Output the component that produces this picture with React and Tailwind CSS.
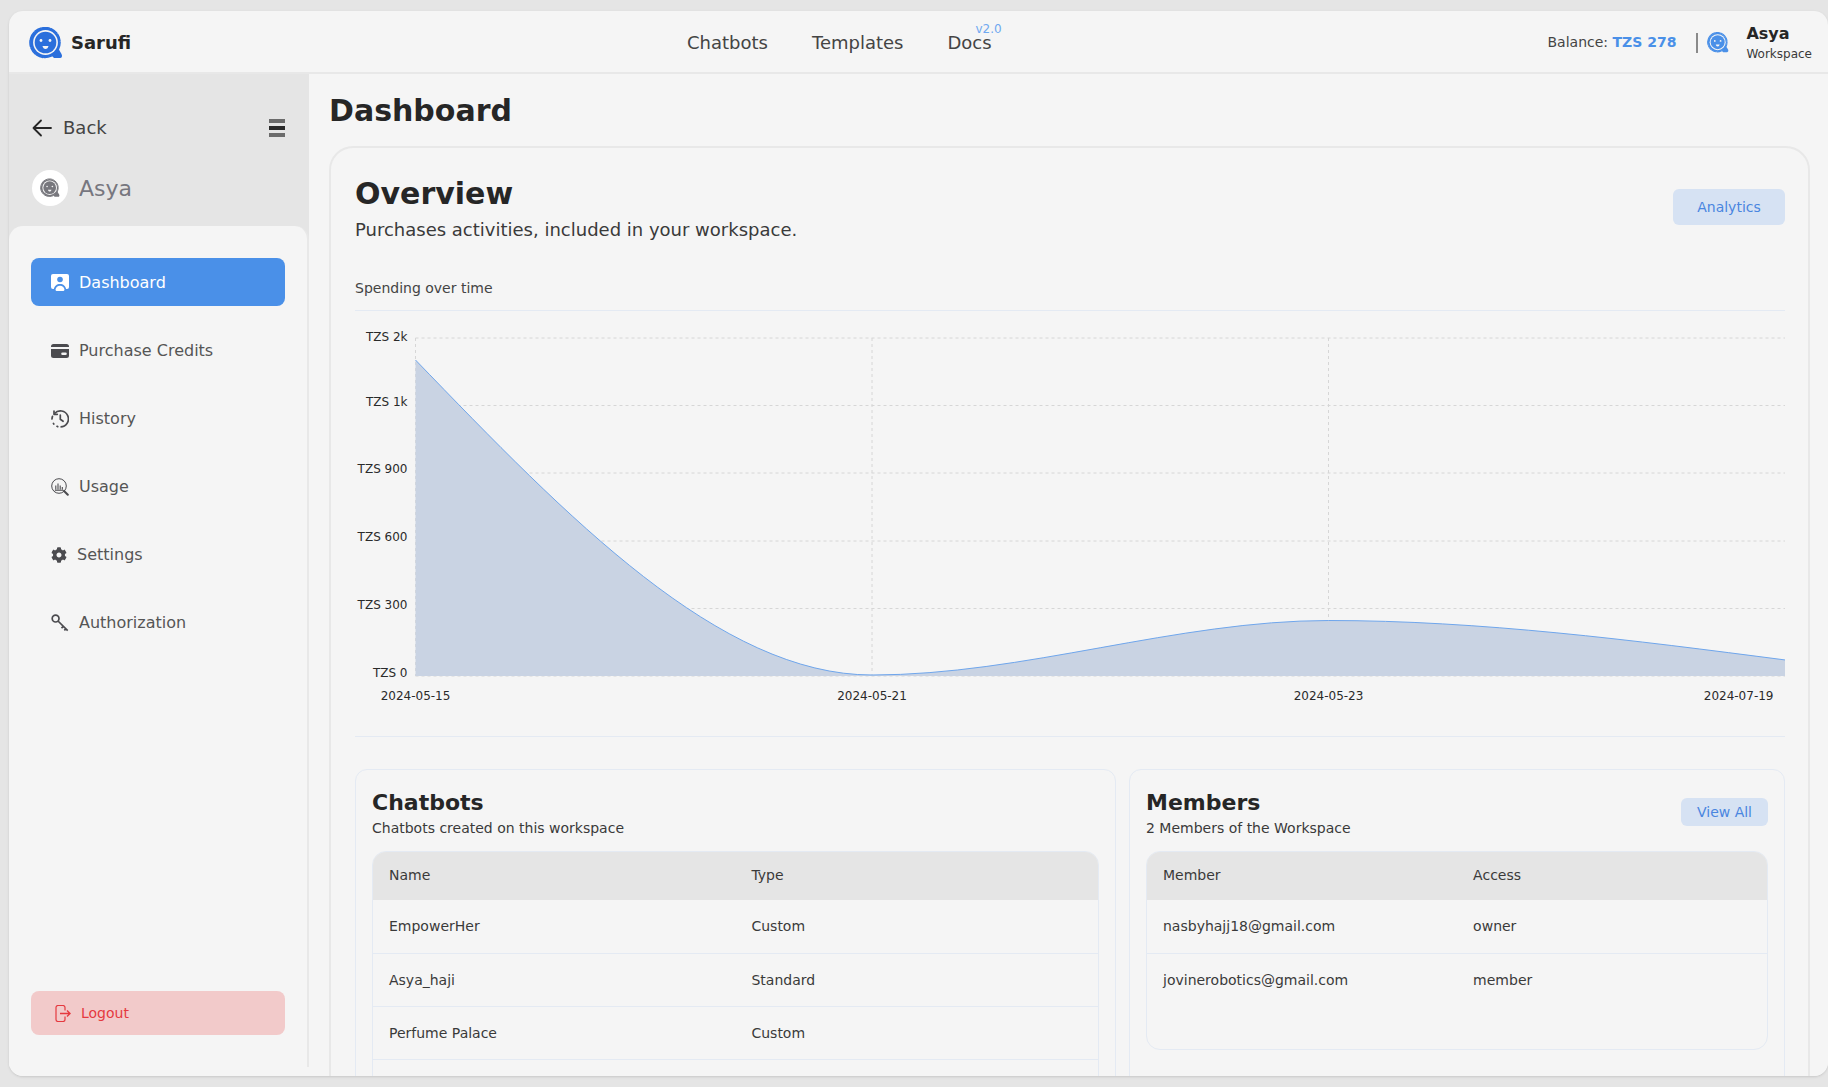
import React from "react";
import { FaCog } from "react-icons/fa";

const BotLogo = ({ color = "#2b6fdc", className = "" }) => (
  <svg viewBox="0 0 34 32" className={className}>
    <circle cx="16" cy="15.500" r="14.800" fill={color} />
    <circle cx="16" cy="15.500" r="15" fill="none" stroke={color} strokeWidth="1.600" strokeDasharray="7 1.500" strokeLinecap="round" />
    <path d="M23 29l6-8 3.500 6c1 2 .5 4-1.500 4h-6z" fill={color} />
    <circle cx="16.500" cy="15.500" r="12.400" fill="#f5f5f5" />
    <circle cx="16.500" cy="15.500" r="10.800" fill={color} />
    <circle cx="12" cy="13.500" r="1.400" fill="#f5f5f5" />
    <circle cx="21" cy="13.500" r="1.400" fill="#f5f5f5" />
    <path d="M13.500 19h6c-.4 2 -1.500 3 -3 3s-2.600 -1 -3 -3z" fill="#f5f5f5" />
  </svg>
);

const BackArrow = () => (
  <svg viewBox="0 0 20 18" className="w-5 h-[18px]" fill="none" stroke="#262626" strokeWidth="1.800" strokeLinecap="round" strokeLinejoin="round">
    <path d="M19 9H1.500M9 1.500L1.500 9 9 16.500" />
  </svg>
);

const DashboardIcon = () => (
  <svg viewBox="0 0 18 18" className="w-[18px] h-[18px]">
    <rect x="0" y="0" width="18" height="15" rx="2" fill="#fff" />
    <circle cx="9" cy="5.500" r="2.800" fill="#4a90e8" />
    <path d="M2.800 15.500c.4-3.500 3-5.500 6.200-5.500s5.800 2 6.200 5.500c0 1.500-1.500 2-2.500 2h-7.400c-1 0-2.500-.5-2.500-2z" fill="#4a90e8" />
    <path d="M4.500 15.500c.4-2.300 2.200-3.700 4.500-3.700s4.100 1.400 4.500 3.700c0 1-1 1.500-1.500 1.500h-6c-.6 0-1.500-.5-1.500-1.500z" fill="#fff" />
  </svg>
);

const CardIcon = () => (
  <svg viewBox="0 0 18 14" className="w-[18px] h-[14px]" fill="#4b4b4f">
    <path d="M2.500 0h13a2.500 2.500 0 0 1 2.500 2.500v.5h-18v-.5a2.500 2.500 0 0 1 2.500-2.500z" />
    <path fillRule="evenodd" d="M0 5h18v6.500a2.500 2.500 0 0 1-2.500 2.500h-13a2.500 2.500 0 0 1-2.500-2.500zM11.500 8.500a1.300 1.300 0 0 0 0 2.600h3a1.300 1.300 0 0 0 0-2.600z" />
    <rect x="12" y="9.300" width="1" height="1" fill="#f5f5f5" />
  </svg>
);

const HistoryIcon = () => (
  <svg viewBox="0 0 18 18" className="w-[18px] h-[18px]" fill="none" stroke="#4b4b4f" strokeWidth="1.700">
    <path d="M3.500 3.500a8 8 0 1 1 6 13.400" />
    <path d="M1 9a8 8 0 0 1 .5-2.600M2.400 13.400l.4.6M6 16.300l.7.300" strokeLinecap="round" />
    <path d="M3 1v3.300h3.300" strokeLinecap="round" strokeLinejoin="round" />
    <path d="M9.300 5v4.300l2.800 2" strokeLinecap="round" strokeLinejoin="round" />
  </svg>
);

const UsageIcon = () => (
  <svg viewBox="0 0 18 18" className="w-[18px] h-[18px]" fill="none" stroke="#4b4b4f">
    <circle cx="8" cy="8" r="7.300" strokeWidth="1" />
    <path d="M4.800 11.500v-4M7 11.500v-6M9.200 11.500v-4M11.300 11.500v-2.500M3.800 12.200h8.500" strokeWidth="1.100" />
    <path d="M13 13l3.800 3.800" strokeWidth="2" strokeLinecap="round" />
  </svg>
);

const KeyIcon = () => (
  <svg viewBox="0 0 18 18" className="w-[18px] h-[18px]" fill="none" stroke="#4b4b4f" strokeWidth="1.700">
    <circle cx="4.600" cy="4.600" r="3.400" />
    <path d="M7 7l9.700 9.700M12.300 12.300l-1.800 1.800M14.800 14.800l-1.500 1.500" />
  </svg>
);

const LogoutIcon = () => (
  <svg viewBox="0 0 16 17" className="w-4 h-[17px]" fill="none" stroke="#e5393f" strokeWidth="1.200">
    <path d="M10 5.500v-3a2 2 0 0 0-2-2h-5a2 2 0 0 0-2 2v12a2 2 0 0 0 2 2h5a2 2 0 0 0 2-2v-3" />
    <path d="M5 8.500h10M12 5.500l3 3-3 3" strokeWidth="1.400" />
  </svg>
);

const navItems = [
  { label: "Dashboard", icon: <DashboardIcon />, active: true },
  { label: "Purchase Credits", icon: <CardIcon /> },
  { label: "History", icon: <HistoryIcon /> },
  { label: "Usage", icon: <UsageIcon /> },
  { label: "Settings", icon: <FaCog className="w-4 h-4 text-[#4b4b4f]" /> },
  { label: "Authorization", icon: <KeyIcon /> },
];

const yTicks = [
  { label: "TZS 2k", y: 337, labelY: 340 },
  { label: "TZS 1k", y: 404.5, labelY: 405 },
  { label: "TZS 900", y: 472, labelY: 472 },
  { label: "TZS 600", y: 540, labelY: 540 },
  { label: "TZS 300", y: 607.5, labelY: 608 },
  { label: "TZS 0", y: 675, labelY: 676 },
];

const xTicks = [
  { label: "2024-05-15", x: 415, anchor: "middle" },
  { label: "2024-05-21", x: 871.5, anchor: "middle" },
  { label: "2024-05-23", x: 1328, anchor: "middle" },
  { label: "2024-07-19", x: 1773, anchor: "end" },
];

const curve =
  "M415 359C567 516.500 719 674 871.500 674C1023.700 674 1175.800 619.500 1328 619.500C1480 619.500 1632.700 639.250 1785 659";

const SpendingChart = () => (
  <svg viewBox="354.500 310 1430 400" className="block w-[1430px] h-[400px]">
    {yTicks.map(({ y }) => (
      <line key={y} x1="415" x2="1785" y1={y} y2={y} stroke="#d6d6d6" strokeDasharray="3 3" />
    ))}
    {[415, 871.5, 1328, 1785].map((x) => (
      <line key={x} x1={x} x2={x} y1="337" y2="675" stroke="#d6d6d6" strokeDasharray="3 3" />
    ))}
    <path d={`${curve}L1785 675L415 675Z`} fill="#c9d3e3" />
    <path d={curve} fill="none" stroke="#6fa6ec" strokeWidth="1" />
    {yTicks.map(({ label, labelY }) => (
      <text key={label} x="407" y={labelY} textAnchor="end" fontSize="12" fill="#2a2a2a">
        {label}
      </text>
    ))}
    {xTicks.map(({ label, x, anchor }) => (
      <text key={label} x={x} y="699" textAnchor={anchor} fontSize="12" fill="#2a2a2a">
        {label}
      </text>
    ))}
  </svg>
);

const DataTable = ({ first, second, rows, tall, firstWidth }) => (
  <div className={`rounded-[14px] border border-[#e4eaf3] overflow-hidden ${tall ? "h-[260px]" : "h-[199px]"}`}>
    <table className="w-full text-sm text-[#3a3a3a] border-collapse">
      <thead>
        <tr className="h-[48px] bg-[#e5e5e5] text-left">
          <th className={`${firstWidth} pl-4 pb-[2px] font-normal`}>{first}</th>
          <th className="pb-[2px] font-normal">{second}</th>
        </tr>
      </thead>
      <tbody>
        {rows.map(([a, b], i) => (
          <tr key={i} className="h-[53px] [&:not(:last-child)]:border-b border-[#e4eaf3]">
            <td className="pl-4">{a}</td>
            <td>{b}</td>
          </tr>
        ))}
      </tbody>
    </table>
  </div>
);

export default function App() {
  return (
    <div className="h-[1087px] overflow-hidden bg-[#e5e5e5] pt-[11px] pb-[11px] pl-[9px] font-['DejaVu_Sans',sans-serif] text-[#262626]">
      <div className="h-full flex flex-col overflow-hidden rounded-[14px] bg-[#f5f5f5] shadow-sm">
        <header className="h-[63px] shrink-0 flex items-center border-b-2 border-[#e8e8e8] pl-5 pr-4 pt-[2px]">
          <div className="w-[300px] flex items-center gap-2">
            <BotLogo className="w-[34px] h-8" />
            <span className="text-lg font-bold">Sarufi</span>
          </div>
          <nav className="flex gap-[44px] ml-[358px] text-lg text-[#444]">
            <a>Chatbots</a>
            <a>Templates</a>
            <a className="relative">
              Docs
              <span className="absolute left-7 -top-2 text-xs text-[#6fa8f0]">v2.0</span>
            </a>
          </nav>
          <div className="ml-auto flex items-center text-sm text-[#444]">
            <span className="mb-[2px]">
              Balance: <b className="text-[#4a90e8]">TZS 278</b>
            </span>
            <span className="w-0.5 h-5 bg-[#8a8a8a] ml-5 mr-[9px]" />
            <BotLogo color="#4a90e8" className="w-[22px] h-[21px]" />
            <div className="ml-[17px] mt-[3px]">
              <div className="text-base font-bold leading-5 text-[#262626]">Asya</div>
              <div className="text-xs leading-5 text-[#3a3a3a]">Workspace</div>
            </div>
          </div>
        </header>

        <div className="flex-1 flex min-h-0">
          <aside className="w-[300px] shrink-0 flex flex-col bg-[linear-gradient(#e5e5e5_0,#e5e5e5_200px,#f5f5f5_200px)]">
            <div className="h-[152px] shrink-0 pl-[23px] pr-6 pt-[36px]">
              <div className="flex items-center justify-between h-9">
                <button className="flex items-center gap-[11px] text-lg text-[#444]">
                  <BackArrow />
                  Back
                </button>
                <div className="flex flex-col gap-[3px]">
                  <span className="w-4 h-1 bg-[#6b6b6b]" />
                  <span className="w-4 h-1 bg-[#2a2a2a]" />
                  <span className="w-4 h-1 bg-[#6b6b6b]" />
                </div>
              </div>
              <div className="flex items-center gap-[11px] mt-[24px]">
                <div className="w-9 h-9 rounded-full bg-white flex items-center justify-center">
                  <BotLogo color="#77777d" className="w-5 h-5" />
                </div>
                <span className="text-[22px] text-[#77777f]">Asya</span>
              </div>
            </div>

            <div className="flex-1 flex flex-col rounded-t-[14px] bg-[#f5f5f5] border-r-2 border-[#e8e8e8] pl-[22px] pr-[22px] pt-8 pb-8 mb-[9px]">
              <nav className="flex flex-col gap-5">
                {navItems.map(({ label, icon, active }) => (
                  <a
                    key={label}
                    className={`h-12 flex items-center gap-[10px] rounded-lg pl-5 pt-[2px] text-base ${
                      active ? "bg-[#4a90e8] text-white" : "text-[#555]"
                    }`}
                  >
                    <span className="shrink-0 flex items-center">{icon}</span>
                    {label}
                  </a>
                ))}
              </nav>
              <button className="mt-auto h-11 flex items-center gap-[10px] rounded-lg bg-[#f2caca] pl-6 text-sm text-[#e5393f]">
                <LogoutIcon />
                Logout
              </button>
            </div>
          </aside>

          <main className="flex-1 min-w-0 pl-5 pr-[18px] pt-[17px] bg-[#f5f5f5]">
            <h1 className="text-[30px] leading-10 font-bold">Dashboard</h1>
            <section className="mt-[15px] rounded-t-[24px] border-2 border-b-0 border-[#e8e8e8] pl-6 pr-[23px] pt-[26px] h-[1000px]">
              <div className="flex items-start justify-between">
                <div>
                  <h2 className="text-[30px] leading-10 font-bold">Overview</h2>
                  <p className="text-lg leading-7 text-[#3a3a3a] mt-[2px]">Purchases activities, included in your workspace.</p>
                </div>
                <button className="mt-[15px] w-28 h-9 rounded-md bg-[#d6e2f3] text-sm text-[#4a86e0]">Analytics</button>
              </div>
              <div className="mt-[34px] pb-[12px] border-b border-[#e4eaf3] text-sm leading-5 text-[#444]">Spending over time</div>
              <SpendingChart />
              <div className="mt-[25px] border-t border-[#e4eaf3] pt-8 flex gap-[13px]">
                <div className="w-[761px] h-[400px] rounded-xl border border-[#e4eaf3] px-4 pt-[19px]">
                  <h3 className="text-[22px] leading-[27px] font-bold">Chatbots</h3>
                  <p className="text-sm leading-6 text-[#3a3a3a] mb-[11px]">Chatbots created on this workspace</p>
                  <DataTable
                    first="Name"
                    second="Type"
                    tall
                    firstWidth="w-[52.2%]"
                    rows={[
                      ["EmpowerHer", "Custom"],
                      ["Asya_haji", "Standard"],
                      ["Perfume Palace", "Custom"],
                      ["\u00a0", ""],
                    ]}
                  />
                </div>
                <div className="flex-1 h-[400px] rounded-xl border border-[#e4eaf3] px-4 pt-[19px]">
                  <div className="flex justify-between">
                    <div>
                      <h3 className="text-[22px] leading-[27px] font-bold">Members</h3>
                      <p className="text-sm leading-6 text-[#3a3a3a] mb-[11px]">2 Members of the Workspace</p>
                    </div>
                    <button className="mt-[9px] w-[87px] h-7 rounded-md bg-[#d6e2f3] text-sm text-[#4a86e0]">View All</button>
                  </div>
                  <DataTable
                    first="Member"
                    second="Access"
                    firstWidth="w-[52.6%]"
                    rows={[
                      ["nasbyhajj18@gmail.com", "owner"],
                      ["jovinerobotics@gmail.com", "member"],
                    ]}
                  />
                </div>
              </div>
            </section>
          </main>
        </div>
      </div>
    </div>
  );
}
